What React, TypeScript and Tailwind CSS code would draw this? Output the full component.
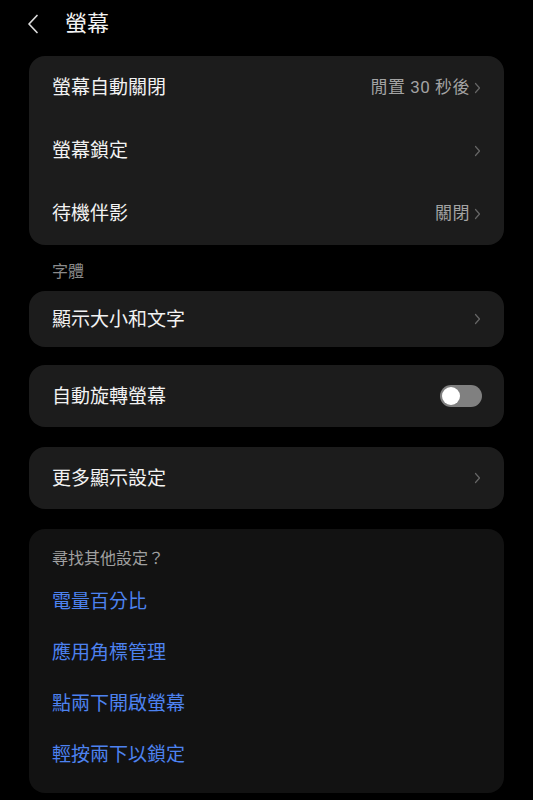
import React from 'react';

const Chevron = () => (
    <svg width="7" height="12" viewBox="0 0 7 12" fill="none" className="shrink-0">
        <path d="M1.5 1.5 5.5 6 1.5 10.5" stroke="#666666" strokeWidth="1.2" strokeLinecap="round" strokeLinejoin="round" />
    </svg>
);

const NavRow = ({ label, value }: { label: string; value?: string }) => (
    <div className="flex h-[63px] items-center justify-between px-[23px]">
        <span className="text-[19px] leading-none text-[#f2f2f2]">{label}</span>
        <div className="flex items-center gap-[4px]">
            {value && <span className="text-[17px] leading-none tracking-[0.5px] text-[#a3a3a3]">{value}</span>}
            <Chevron />
        </div>
    </div>
);

const links = ['電量百分比', '應用角標管理', '點兩下開啟螢幕', '輕按兩下以鎖定'];

export default function App() {
    return (
        <div className="min-h-[800px] w-full bg-black font-['Roboto','Noto_Sans_CJK_TC',sans-serif]">
            <div className="flex h-[48px] items-center">
                <svg width="12" height="20" viewBox="0 0 12 20" fill="none" className="ml-[27px]">
                    <path d="M10 1.5 2 10l8 8.5" stroke="#dcdcdc" strokeWidth="1.7" strokeLinecap="round" strokeLinejoin="round" />
                </svg>
                <h1 className="ml-[26px] text-[22px] leading-none text-[#f2f2f2]">螢幕</h1>
            </div>

            <div className="flex flex-col px-[29px] pt-[8px]">
                <div className="rounded-[16px] bg-[#1c1c1c]">
                    <NavRow label="螢幕自動關閉" value="閒置 30 秒後" />
                    <NavRow label="螢幕鎖定" />
                    <NavRow label="待機伴影" value="關閉" />
                </div>

                <div className="px-[23px] pt-[18px] pb-[10px] text-[16px] leading-[18px] text-[#8a8a8a]">字體</div>

                <div className="flex h-[56px] items-center justify-between rounded-[16px] bg-[#1c1c1c] px-[23px]">
                    <span className="text-[19px] leading-none text-[#f2f2f2]">顯示大小和文字</span>
                    <Chevron />
                </div>

                <div className="mt-[18px] flex h-[62px] items-center justify-between rounded-[16px] bg-[#1c1c1c] pl-[23px] pr-[22px]">
                    <span className="text-[19px] leading-none text-[#f2f2f2]">自動旋轉螢幕</span>
                    <div className="flex h-[22px] w-[42px] items-center rounded-full bg-[#808080] px-[2px]">
                        <div className="h-[18px] w-[18px] rounded-full bg-white" />
                    </div>
                </div>

                <div className="mt-[20px] flex h-[62px] items-center justify-between rounded-[16px] bg-[#1c1c1c] px-[23px]">
                    <span className="text-[19px] leading-none text-[#f2f2f2]">更多顯示設定</span>
                    <Chevron />
                </div>

                <div className="mt-[20px] rounded-[16px] bg-[#121212] px-[23px] pt-[20px] pb-[13px]">
                    <div className="h-[20px] text-[16px] leading-[20px] text-[#a0a0a0]">尋找其他設定？</div>
                    <div className="mt-[7px] flex flex-col">
                        {links.map(item => (
                            <div key={item} className="flex h-[51px] items-center text-[19px] leading-none text-[#4d82f0]">
                                {item}
                            </div>
                        ))}
                    </div>
                </div>
            </div>
        </div>
    );
}
